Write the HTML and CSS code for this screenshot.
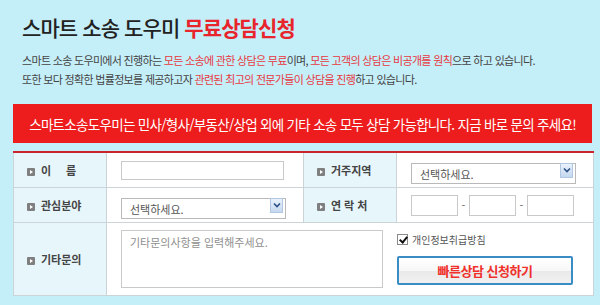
FILE: index.html
```html
<!DOCTYPE html>
<html lang="ko">

<head>
	<meta charset="UTF-8" />
	<title>스마트 소송 도우미 무료상담신청</title>
	<link rel="stylesheet" href="styles.css">
</head>

<body>
	<div class="page">
		<h1 class="title">스마트 소송 도우미 <strong>무료상담신청</strong></h1>
		<p class="intro">
			스마트 소송 도우미에서 진행하는 <em>모든 소송에 관한 상담은 무료</em>이며, <em>모든 고객의 상담은 비공개를 원칙</em>으로 하고 있습니다.<br>
			또한 보다 정확한 법률정보를 제공하고자 <em>관련된 최고의 전문가들이 상담을 진행</em>하고 있습니다.
		</p>

		<div class="notice">스마트소송도우미는 민사/형사/부동산/상업 외에 기타 소송 모두 상담 가능합니다. 지금 바로 문의 주세요!</div>

		<table class="form-table">
			<colgroup>
				<col class="col-label">
				<col class="col-field">
				<col class="col-label">
				<col class="col-field">
			</colgroup>
			<tr class="row-short">
				<th><span class="bullet"></span><span class="name-label">이름</span></th>
				<td><input type="text" class="text-input"></td>
				<th><span class="bullet"></span>거주지역</th>
				<td>
					<div class="select-box">
						<select>
							<option>선택하세요.</option>
						</select>
						<span class="select-arrow"><svg width="8" height="6" viewBox="0 0 8 6"><path d="M1 1.5 L4 4.5 L7 1.5" fill="none" stroke="#2b4f86" stroke-width="1.6"/></svg></span>
					</div>
				</td>
			</tr>
			<tr class="row-short">
				<th><span class="bullet"></span>관심분야</th>
				<td>
					<div class="select-box">
						<select>
							<option>선택하세요.</option>
						</select>
						<span class="select-arrow"><svg width="8" height="6" viewBox="0 0 8 6"><path d="M1 1.5 L4 4.5 L7 1.5" fill="none" stroke="#2b4f86" stroke-width="1.6"/></svg></span>
					</div>
				</td>
				<th><span class="bullet"></span><span class="phone-label">연락처</span></th>
				<td>
					<div class="phone-group">
						<input type="text" class="phone-input">
						<span class="dash">-</span>
						<input type="text" class="phone-input">
						<span class="dash">-</span>
						<input type="text" class="phone-input">
					</div>
				</td>
			</tr>
			<tr class="row-tall">
				<th><span class="bullet"></span>기타문의</th>
				<td colspan="3">
					<div class="message-area">
						<textarea placeholder="기타문의사항을 입력해주세요."></textarea>
						<div class="submit-side">
							<label class="agree"><input type="checkbox" checked> 개인정보취급방침</label>
							<button type="button" class="submit-btn">빠른상담 신청하기</button>
						</div>
					</div>
				</td>
			</tr>
		</table>
	</div>
</body>

</html>
```

FILE: styles.css
```css
body {
	margin: 0;
	background-color: #c4eef8;
	font-family: "Noto Sans CJK KR", "Noto Sans", sans-serif;
	color: #333;
}

.page {
	padding: 13px 8px 0 13px;
}

.title {
	margin: 0;
	padding-left: 9px;
	font-size: 21px;
	line-height: 28px;
	font-weight: 500;
	letter-spacing: -0.9px;
	color: #222;
}

.title strong {
	color: #e8242c;
	font-weight: 700;
}

.intro {
	margin: 10px 0 0;
	padding-left: 9px;
	font-size: 11px;
	line-height: 19px;
	letter-spacing: -0.68px;
	color: #444;
}

.intro em {
	font-style: normal;
	color: #e8383f;
}

.notice {
	margin-top: 15px;
	width: 579px;
	height: 39px;
	background-color: #ee1d1d;
	color: #fff;
	font-size: 13.5px;
	letter-spacing: -0.7px;
	display: flex;
	align-items: center;
	justify-content: center;
}

.form-table {
	margin-top: 8px;
	width: 579px;
	border-collapse: collapse;
	table-layout: fixed;
	border-top: 2px solid #c9252b;
}

.col-label {
	width: 93px;
}

.col-field {
	width: 197px;
}

.form-table th,
.form-table td {
	border: 1px solid #cbd5d8;
	padding: 0;
}

.form-table th {
	background-color: #e7f6fb;
	text-align: left;
	padding-left: 13px;
	font-size: 11px;
	font-weight: bold;
	color: #444;
	white-space: nowrap;
}

.form-table td {
	background-color: #fff;
	padding-left: 14px;
}

.row-short th,
.row-short td {
	height: 34px;
}

.row-tall th,
.row-tall td {
	height: 72px;
}

.bullet {
	display: inline-block;
	position: relative;
	width: 8px;
	height: 8px;
	margin-right: 6px;
	vertical-align: -1px;
	background-color: #7f7f7f;
	border-radius: 1px;
}

.bullet::after {
	content: "";
	position: absolute;
	left: 3px;
	top: 2px;
	border-left: 3px solid #fff;
	border-top: 2px solid transparent;
	border-bottom: 2px solid transparent;
}

.name-label {
	letter-spacing: 15px;
}

.phone-label {
	letter-spacing: 3px;
}

.text-input {
	box-sizing: border-box;
	width: 163px;
	height: 19px;
	border: 1px solid #c9c9c9;
	display: block;
}

.select-box {
	position: relative;
	width: 165px;
	height: 21px;
}

.select-box select {
	appearance: none;
	box-sizing: border-box;
	width: 100%;
	height: 100%;
	border: 1px solid #b9b9b9;
	background: #fff;
	padding: 0 8px;
	font-family: inherit;
	font-size: 11px;
	color: #555;
}

.select-arrow {
	position: absolute;
	right: 3px;
	top: 3px;
	width: 13px;
	height: 15px;
	background: linear-gradient(#eaf2fb, #c5d8ef);
	border: 1px solid #b2c7e2;
	box-sizing: border-box;
	display: flex;
	align-items: center;
	justify-content: center;
}

.phone-group {
	display: flex;
	align-items: center;
}

.phone-input {
	box-sizing: border-box;
	width: 47px;
	height: 21px;
	border: 1px solid #c9c9c9;
}

.dash {
	width: 11px;
	text-align: center;
	font-size: 11px;
	color: #666;
}

.message-area {
	display: flex;
	align-items: flex-start;
	gap: 14px;
}

.message-area textarea {
	box-sizing: border-box;
	width: 262px;
	height: 58px;
	border: 1px solid #c9c9c9;
	padding: 3px 8px;
	resize: none;
	font-family: inherit;
	font-size: 11px;
}

.message-area textarea::placeholder {
	color: #8f8f8f;
}

.submit-side {
	display: flex;
	flex-direction: column;
	gap: 9px;
	margin-top: 2px;
}

.agree {
	display: flex;
	align-items: center;
	gap: 4px;
	font-size: 10px;
	color: #555;
}

.agree input {
	appearance: none;
	position: relative;
	margin: 0;
	width: 11px;
	height: 11px;
	border: 1px solid #8a8a8a;
	background: #fff;
}

.agree input:checked::after {
	content: "";
	position: absolute;
	left: 3px;
	top: 0;
	width: 3px;
	height: 6px;
	border-right: 2px solid #111;
	border-bottom: 2px solid #111;
	transform: rotate(40deg);
}

.submit-btn {
	box-sizing: border-box;
	width: 176px;
	height: 29px;
	border: 2px solid #3a8dc4;
	border-radius: 2px;
	background: linear-gradient(#fff, #f7f7f7 50%, #e9e9e9 51%, #f1f1f1);
	color: #f0302a;
	font-family: inherit;
	font-size: 13px;
	font-weight: bold;
	letter-spacing: -0.5px;
	cursor: pointer;
}
```
